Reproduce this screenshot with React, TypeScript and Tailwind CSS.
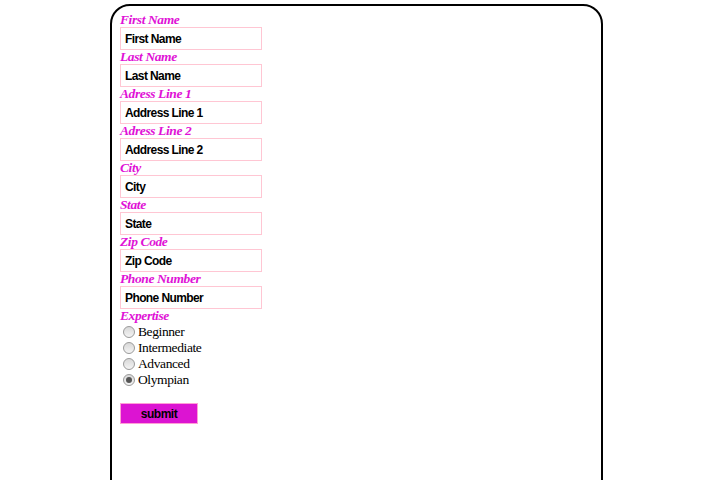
import React from "react";

const fields = [
  "First Name",
  "Last Name",
  "Address Line 1",
  "Address Line 2",
  "City",
  "State",
  "Zip Code",
  "Phone Number",
];
const labels = [
  "First Name",
  "Last Name",
  "Adress Line 1",
  "Adress Line 2",
  "City",
  "State",
  "Zip Code",
  "Phone Number",
];
const levels = ["Beginner", "Intermediate", "Advanced", "Olympian"];

function Radio({ checked }: { checked?: boolean }) {
  return (
    <span className="ml-[3px] mr-[3px] flex h-[12px] w-[12px] items-center justify-center rounded-full border border-[#9a9a9a] bg-gradient-to-b from-[#d8d8d8] to-[#f4f4f4]">
      {checked && <span className="h-[6px] w-[6px] rounded-full bg-[#555]" />}
    </span>
  );
}

export default function App() {
  return (
    <div className="h-[480px] w-[720px] overflow-hidden bg-white">
      <div className="ml-[110px] mt-[4px] h-[520px] w-[493px] rounded-[20px] border-2 border-black px-[8px] pt-[7px]">
        {fields.map((f, i) => (
          <div key={f}>
            <div
              className="h-[14px] text-[13.5px] font-bold italic leading-[14px] tracking-[-0.4px] text-[#e012d6]"
              style={{ fontFamily: '"Liberation Serif", serif' }}
            >
              {labels[i]}
            </div>
            <div
              className="flex h-[23px] w-[142px] items-center border border-[#ffc6d3] pl-[4px] text-[12px] font-bold tracking-[-0.6px] text-black"
              style={{ fontFamily: '"Liberation Sans", sans-serif' }}
            >
              {f}
            </div>
          </div>
        ))}
        <div
          className="h-[14px] text-[13.5px] font-bold italic leading-[14px] tracking-[-0.4px] text-[#e012d6]"
          style={{ fontFamily: '"Liberation Serif", serif' }}
        >
          Expertise
        </div>
        <div className="flex flex-col pt-[1px]">
          {levels.map((l) => (
            <div key={l} className="flex h-[16px] items-center">
              <Radio checked={l === "Olympian"} />
              <span
                className="text-[13.5px] leading-[16px] tracking-[-0.4px] text-black"
                style={{ fontFamily: '"Liberation Serif", serif' }}
              >
                {l}
              </span>
            </div>
          ))}
        </div>
        <button
          className="mt-[15px] flex h-[21px] w-[78px] items-center justify-center border border-[#ff9ed6] bg-[#dc14d2] text-[12px] font-bold tracking-[-0.5px] text-black"
          style={{ fontFamily: '"Liberation Sans", sans-serif' }}
        >
          submit
        </button>
      </div>
    </div>
  );
}
